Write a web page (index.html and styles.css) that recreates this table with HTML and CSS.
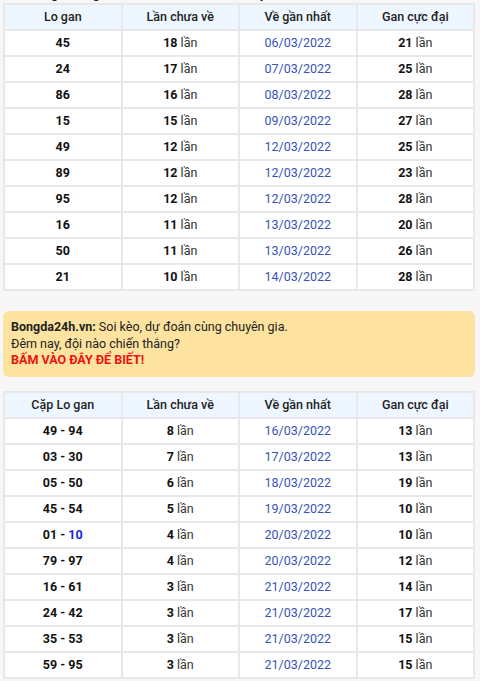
FILE: index.html
```html
<!DOCTYPE html>
<html lang="vi">
<head>
<meta charset="utf-8">
<link rel="stylesheet" href="styles.css">
</head>
<body>
<div class="page">
  <div class="cut-title">Thống kê lô gan lâu chưa về nhất hôm nay</div>
  <table class="gan">
    <thead>
      <tr><th>Lo gan</th><th>Lần chưa về</th><th>Về gần nhất</th><th>Gan cực đại</th></tr>
    </thead>
    <tbody>
      <tr><td><b>45</b></td><td><b>18</b> lần</td><td class="date">06/03/2022</td><td><b>21</b> lần</td></tr>
      <tr><td><b>24</b></td><td><b>17</b> lần</td><td class="date">07/03/2022</td><td><b>25</b> lần</td></tr>
      <tr><td><b>86</b></td><td><b>16</b> lần</td><td class="date">08/03/2022</td><td><b>28</b> lần</td></tr>
      <tr><td><b>15</b></td><td><b>15</b> lần</td><td class="date">09/03/2022</td><td><b>27</b> lần</td></tr>
      <tr><td><b>49</b></td><td><b>12</b> lần</td><td class="date">12/03/2022</td><td><b>25</b> lần</td></tr>
      <tr><td><b>89</b></td><td><b>12</b> lần</td><td class="date">12/03/2022</td><td><b>23</b> lần</td></tr>
      <tr><td><b>95</b></td><td><b>12</b> lần</td><td class="date">12/03/2022</td><td><b>28</b> lần</td></tr>
      <tr><td><b>16</b></td><td><b>11</b> lần</td><td class="date">13/03/2022</td><td><b>20</b> lần</td></tr>
      <tr><td><b>50</b></td><td><b>11</b> lần</td><td class="date">13/03/2022</td><td><b>26</b> lần</td></tr>
      <tr><td><b>21</b></td><td><b>10</b> lần</td><td class="date">14/03/2022</td><td><b>28</b> lần</td></tr>
    </tbody>
  </table>

  <div class="promo">
    <b>Bongda24h.vn:</b> Soi kèo, dự đoán cùng chuyên gia.<br>
    Đêm nay, đội nào chiến thắng?<br>
    <b class="cta">BẤM VÀO ĐÂY ĐỂ BIẾT!</b>
  </div>

  <table class="gan">
    <thead>
      <tr><th>Cặp Lo gan</th><th>Lần chưa về</th><th>Về gần nhất</th><th>Gan cực đại</th></tr>
    </thead>
    <tbody>
      <tr><td><b>49 - 94</b></td><td><b>8</b> lần</td><td class="date">16/03/2022</td><td><b>13</b> lần</td></tr>
      <tr><td><b>03 - 30</b></td><td><b>7</b> lần</td><td class="date">17/03/2022</td><td><b>13</b> lần</td></tr>
      <tr><td><b>05 - 50</b></td><td><b>6</b> lần</td><td class="date">18/03/2022</td><td><b>19</b> lần</td></tr>
      <tr><td><b>45 - 54</b></td><td><b>5</b> lần</td><td class="date">19/03/2022</td><td><b>10</b> lần</td></tr>
      <tr><td><b>01 - <span class="hl">10</span></b></td><td><b>4</b> lần</td><td class="date">20/03/2022</td><td><b>10</b> lần</td></tr>
      <tr><td><b>79 - 97</b></td><td><b>4</b> lần</td><td class="date">20/03/2022</td><td><b>12</b> lần</td></tr>
      <tr><td><b>16 - 61</b></td><td><b>3</b> lần</td><td class="date">21/03/2022</td><td><b>14</b> lần</td></tr>
      <tr><td><b>24 - 42</b></td><td><b>3</b> lần</td><td class="date">21/03/2022</td><td><b>17</b> lần</td></tr>
      <tr><td><b>35 - 53</b></td><td><b>3</b> lần</td><td class="date">21/03/2022</td><td><b>15</b> lần</td></tr>
      <tr><td><b>59 - 95</b></td><td><b>3</b> lần</td><td class="date">21/03/2022</td><td><b>15</b> lần</td></tr>
    </tbody>
  </table>
</div>
</body>
</html>
```

FILE: styles.css
```css
html, body {
  margin: 0;
  padding: 0;
  background: #f7f7f7;
}
body {
  font-family: Roboto, "Noto Sans", Arial, sans-serif;
  font-size: 12.5px;
  color: #222;
}
.page {
  padding: 0 5px 0 3px;
  overflow: hidden;
}
.cut-title {
  font-size: 13px;
  font-weight: 700;
  line-height: 16px;
  margin-top: -14px;
  height: 17px;
  padding-left: 18px;
  color: #222;
}
.gan {
  width: 472px;
  border-collapse: collapse;
  table-layout: fixed;
  background: #fff;
  border: 2px solid #e6e6e6;
}
.gan th, .gan td {
  border: 2px solid #e8e8ea;
  height: 22px;
  padding: 1px 4px;
  text-align: center;
  font-size: 12.5px;
  line-height: 20px;
}
.gan th {
  background: #eef6ff;
  font-weight: 500;
  color: #222;
}
.gan td {
  color: #333;
}
.gan td b {
  color: #111;
}
.gan td.date {
  color: #3653b8;
}
.gan .hl {
  color: #1a22e6;
}
.promo {
  margin: 20px 0 14px;
  width: 472px;
  box-sizing: border-box;
  background: #fde39f;
  border-radius: 6px;
  padding: 8px 8px 8px;
  line-height: 16.5px;
  font-size: 12.5px;
  color: #222;
}
.promo .cta {
  color: #ee1111;
}
```
